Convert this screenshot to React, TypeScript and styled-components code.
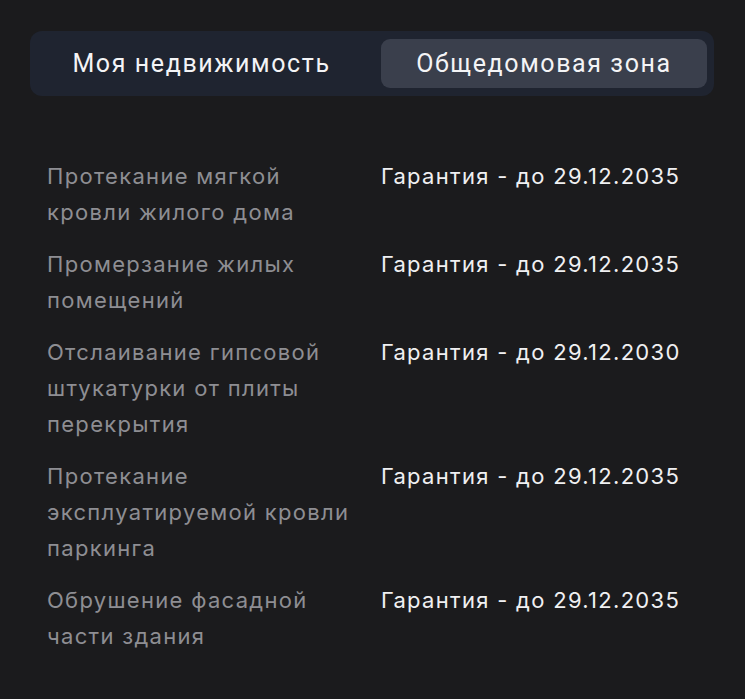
import React from "react";
import styled, { createGlobalStyle } from "styled-components";

const GlobalStyle = createGlobalStyle`
  html, body {
    margin: 0;
    padding: 0;
    background: #1b1b1d;
  }
`;

const items = [
  { title: "Протекание мягкой кровли жилого дома", date: "29.12.2035" },
  { title: "Промерзание жилых помещений", date: "29.12.2035" },
  { title: "Отслаивание гипсовой штукатурки от плиты перекрытия", date: "29.12.2030" },
  { title: "Протекание эксплуатируемой кровли паркинга", date: "29.12.2035" },
  { title: "Обрушение фасадной части здания", date: "29.12.2035" },
];

export default function App() {
  return (
    <Page>
      <GlobalStyle />
      <Tabs>
        <Tab>Моя недвижимость</Tab>
        <Tab active>Общедомовая зона</Tab>
      </Tabs>
      <List>
        {items.map((item, i) => (
          <Row key={i}>
            <Title>{item.title}</Title>
            <Warranty>Гарантия - до {item.date}</Warranty>
          </Row>
        ))}
      </List>
    </Page>
  );
}

const Page = styled.div`
  width: 745px;
  height: 699px;
  box-sizing: border-box;
  padding: 31px 31px 0 30px;
  background: #1b1b1d;
`;

const Tabs = styled.div`
  display: grid;
  grid-template-columns: 327px 326px;
  gap: 16px;
  height: 65px;
  box-sizing: border-box;
  padding: 8px 7px 8px 8px;
  background: #1f2430;
  border-radius: 12px;
`;

const Tab = styled.div<{ active?: boolean }>`
  display: flex;
  align-items: center;
  justify-content: center;
  border-radius: 9px;
  background: ${(p) => (p.active ? "#3a3f4c" : "transparent")};
  color: #f4f4f6;
  font-family: Roboto, "Liberation Sans", sans-serif;
  font-size: 25px;
  letter-spacing: 1.6px;
`;

const List = styled.div`
  display: flex;
  flex-direction: column;
  gap: 16px;
  padding: 62px 0 0 17px;
`;

const Row = styled.div`
  display: grid;
  grid-template-columns: 320px 1fr;
  column-gap: 14px;
  font-family: Inter, "Noto Sans", sans-serif;
  font-size: 22px;
  line-height: 36px;
  letter-spacing: 1.3px;
`;

const Title = styled.div`
  color: #8e8e93;
`;

const Warranty = styled.div`
  color: #f0f0f2;
`;
